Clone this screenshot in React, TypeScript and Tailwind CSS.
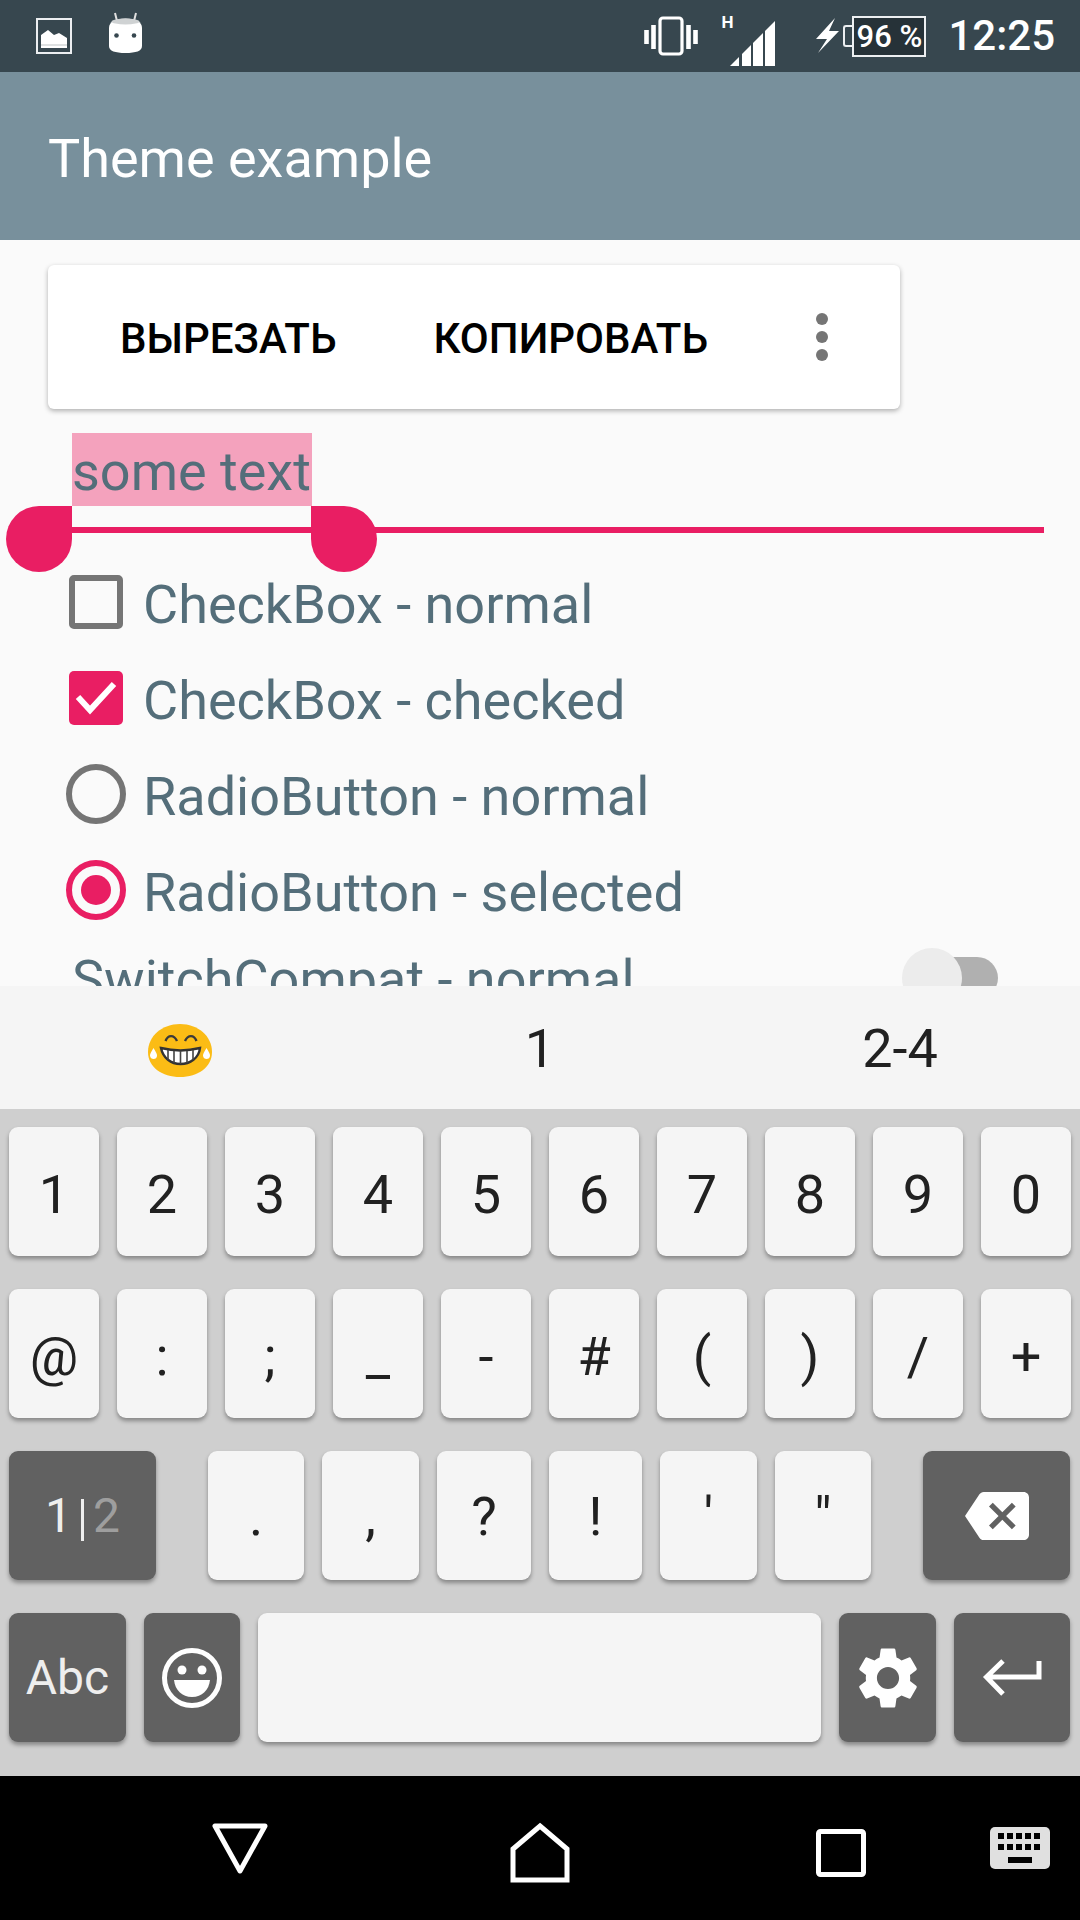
import React from "react";
import { MdSettings, MdBackspace } from "react-icons/md";

const font = { fontFamily: "Roboto, sans-serif" };

function Key({ label, w, dark, className = "", children }: { label?: string; w?: string; dark?: boolean; className?: string; children?: React.ReactNode }) {
  return (
    <div
      className={`flex h-[129px] items-center justify-center rounded-[9px] shadow-[0_3px_4px_rgba(0,0,0,0.35)] ${dark ? "bg-[#616161] text-[#eeeeee]" : "bg-[#f5f5f5] text-[#212121]"} leading-none ${className || "text-[54px]"} ${w ?? "flex-1"}`}
    >
      {label}
      {children}
    </div>
  );
}

function Emoji() {
  return (
    <svg width="100" height="80" viewBox="0 0 100 80" className="mt-[6px]">
      <path d="M50 13C68 13 82 25 82 41C82 56 68 66 50 66C32 66 18 56 18 41C18 25 32 13 50 13Z" fill="#fbbc15" />
      <path d="M35.500 30C38 23.500 44 23.500 47 30M55 30C58 23.500 64 23.500 66.500 30" fill="none" stroke="#3a3a3a" strokeWidth="2.400" />
      <path d="M31 37C43 40 58 40 70 37C69 47 60 53 50.500 53C41 53 33 47 31 37Z" fill="#fff" stroke="#333" strokeWidth="2.400" />
      <path d="M38 39V49M44 40V52M50.500 40V53M57 40V52M63 39V49" stroke="#444" strokeWidth="1.600" />
      <path d="M23.500 37C21 41 20 43 20 44.500C20 47 22 48 23.500 48C25.500 48 27 47 27 44.500C27 43 26 41 23.500 37Z" fill="#fff" />
      <path d="M76.500 37C74 41 73 43 73 44.500C73 47 75 48 76.500 48C78.500 48 80 47 80 44.500C80 43 79 41 76.500 37Z" fill="#fff" />
    </svg>
  );
}

function StatusBar() {
  const bars = [[730, 739], [742, 751], [753, 763], [765, 775]];
  return (
    <div className="relative flex h-[72px] shrink-0 items-center bg-[#37474f] pl-[36px] pr-[25px] text-white">
      <svg width="36" height="36" viewBox="0 0 36 36" className="mt-[-1px]">
        <rect x="1" y="1" width="34" height="34" fill="none" stroke="#eceff1" strokeWidth="2" />
        <path d="M5 30V17L12 12L18 17L23 15L31 20V30Z" fill="#fff" />
        <path d="M5 27H31" stroke="#37474f" strokeWidth="0.8" opacity="0.4" />
      </svg>
      <svg width="36" height="42" viewBox="0 0 36 42" className="ml-[36px] mt-[-6px]">
        <path d="M7 1L9 9M28 1L26 9" stroke="#e0e0e0" strokeWidth="2" />
        <path d="M1 16C1 10 7 6.500 17.500 6.500C28 6.500 34 10 34 16V34C34 39 28 41 17.500 41C7 41 1 39 1 34Z" fill="#fff" />
        <ellipse cx="17.500" cy="9.500" rx="14" ry="3" fill="#cfd2d3" />
        <circle cx="8.500" cy="23.500" r="2.300" fill="#37474f" />
        <circle cx="26" cy="23.500" r="2.300" fill="#37474f" />
      </svg>
      <div className="flex-1" />
      <svg width="54" height="40" viewBox="0 0 54 40" className="mr-[23px]">
        <rect x="16" y="2" width="22" height="36" rx="3" fill="none" stroke="#fff" strokeWidth="3.200" />
        <path d="M2.500 14V28M9.500 9V33M44.500 9V33M51.500 14V28" stroke="#fff" strokeWidth="4.600" />
      </svg>
      <div className="relative h-[60px] w-[54px]">
        <span className="absolute left-0 top-[6px] text-[17px] font-bold leading-[20px]">H</span>
        <svg width="45" height="45" viewBox="730 15 45 45" className="absolute left-[9px] top-[15px]">
          {bars.map(([a, b]) => (
            <polygon key={a} points={`${a},60 ${a},${60 - (a - 730)} ${b},${60 - (b - 730)} ${b},60`} fill="#fff" />
          ))}
        </svg>
      </div>
      <svg width="24" height="36" viewBox="0 0 24 36" className="ml-[40px]">
        <path d="M20 0L1 21H12L3 35L24 13H14Z" fill="#fff" />
      </svg>
      <div className="ml-[4px] flex items-center">
        <div className="h-[22px] w-[9px] rounded-l-[3px] border-2 border-r-0 border-[#eceff1]" />
        <div className="flex h-[41px] w-[74px] items-center justify-center border-2 border-[#eceff1] bg-[#263238] text-[31px] font-medium leading-none">
          96 %
        </div>
      </div>
      <span className="ml-[22px] text-[42px] font-medium leading-none">12:25</span>
    </div>
  );
}

function Dots() {
  return (
    <svg width="12" height="48" viewBox="0 0 12 48" className="ml-auto mr-[72px] mt-[-4px]">
      <circle cx="6" cy="6" r="6" fill="#757575" />
      <circle cx="6" cy="24" r="6" fill="#757575" />
      <circle cx="6" cy="42" r="6" fill="#757575" />
    </svg>
  );
}

function Row({ icon, label }: { icon: React.ReactNode; label: string }) {
  return (
    <div className="flex h-[96px] items-center pl-[66px]">
      <div className="flex w-[60px] items-center justify-center">{icon}</div>
      <span className="ml-[17px] pt-[5px] text-[54px] leading-none text-[#546e7a]">{label}</span>
    </div>
  );
}

function Content() {
  return (
    <div className="relative h-[746px] shrink-0 overflow-hidden bg-[#fafafa] pt-[193px]">
      <div className="absolute left-[48px] top-[25px] flex h-[144px] w-[852px] items-center rounded-[6px] bg-white pl-[72px] pt-[3px] text-[42px] font-medium text-black shadow-[0_2px_5px_rgba(0,0,0,0.3)]">
        <span>ВЫРЕЗАТЬ</span>
        <span className="ml-[97px]">КОПИРОВАТЬ</span>
        <Dots />
      </div>
      <div className="relative pl-[72px]">
        <span className="block h-[73px] w-[240px] bg-[#f4a2bd] text-[54px] leading-[77px] text-[#546e7a]">some text</span>
        <div className="mt-[21px] h-[6px] w-[972px] bg-[#e91e63]" />
        <div className="absolute left-[6px] top-[73px] h-[66px] w-[66px] rounded-tl-[33px] rounded-bl-[33px] rounded-br-[33px] bg-[#e91e63]" />
        <div className="absolute left-[311px] top-[73px] h-[66px] w-[66px] rounded-tr-[33px] rounded-bl-[33px] rounded-br-[33px] bg-[#e91e63]" />
      </div>
      <div className="mt-[21px]">
        <Row icon={<div className="h-[54px] w-[54px] rounded-[5px] border-[6px] border-[#757575]" />} label="CheckBox - normal" />
        <Row
          icon={
            <div className="flex h-[54px] w-[54px] items-center justify-center rounded-[5px] bg-[#e91e63]">
              <svg width="42" height="34" viewBox="0 0 42 34">
                <path d="M3 16L15 29L39 3" fill="none" stroke="#fff" strokeWidth="6" />
              </svg>
            </div>
          }
          label="CheckBox - checked"
        />
        <Row icon={<div className="h-[60px] w-[60px] rounded-full border-[6px] border-[#757575]" />} label="RadioButton - normal" />
        <Row
          icon={
            <div className="flex h-[60px] w-[60px] items-center justify-center rounded-full border-[6px] border-[#e91e63]">
              <div className="h-[30px] w-[30px] rounded-full bg-[#e91e63]" />
            </div>
          }
          label="RadioButton - selected"
        />
        <div className="relative flex h-[84px] items-center pl-[72px]">
          <span className="text-[54px] leading-none text-[#546e7a]">SwitchCompat - normal</span>
          <div className="absolute left-[930px] top-[19px] h-[42px] w-[68px] rounded-full bg-[#b0b0b0]" />
          <div className="absolute left-[902px] top-[10px] h-[60px] w-[60px] rounded-full bg-[#ececec]" />
        </div>
      </div>
    </div>
  );
}

function Candidates() {
  return (
    <div className="grid h-[123px] shrink-0 grid-cols-3 items-center justify-items-center bg-[#f5f5f5] text-[54px] leading-none text-[#212121]">
      <Emoji />
      <span className="pt-[3px]">1</span>
      <span className="pt-[3px]">2-4</span>
    </div>
  );
}

function Keyboard() {
  const r1 = ["1", "2", "3", "4", "5", "6", "7", "8", "9", "0"];
  const r2 = ["@", ":", ";", "_", "-", "#", "(", ")", "/", "+"];
  return (
    <div className="flex h-[667px] shrink-0 flex-col gap-[33px] bg-[#cfcfcf] px-[9px] pt-[18px]">
      <div className="flex gap-[18px]">
        {r1.map((k) => (
          <Key key={k} label={k} w="flex-1 pt-[6px]" />
        ))}
      </div>
      <div className="flex gap-[18px]">
        {r2.map((k) => (
          <Key key={k} label={k} w="flex-1 pt-[6px]" />
        ))}
      </div>
      <div className="flex">
        <Key dark w="w-[147px]" className="text-[48px]">
          <span>1</span>
          <span className="mx-[9px] h-[42px] w-[3px] translate-y-[4px] bg-[#eeeeee]" />
          <span className="text-[#9e9e9e]">2</span>
        </Key>
        <div className="ml-[52px] flex gap-[18px]">
          <Key label="." w="w-[96px] pt-[3px]" />
          <Key label="," w="w-[97px] pt-[3px]" />
          <Key label="?" w="w-[94px] pt-[3px]" />
          <Key label="!" w="w-[93px] pt-[3px]" />
          <Key label="'" w="w-[97px] pt-[3px]" />
          <Key label={'"'} w="w-[96px] pt-[3px]" />
        </div>
        <Key dark w="w-[147px] ml-[52px]">
          <MdBackspace size={64} color="#ffffff" />
        </Key>
      </div>
      <div className="flex gap-[18px]">
        <Key dark label="Abc" w="w-[117px]" className="text-[48px]" />
        <Key dark w="w-[96px]">
          <svg width="62" height="62" viewBox="0 0 62 62">
            <circle cx="31" cy="31" r="27.500" fill="none" stroke="#fff" strokeWidth="5" />
            <circle cx="21" cy="23" r="4.500" fill="#fff" />
            <circle cx="41" cy="23" r="4.500" fill="#fff" />
            <path d="M13 33H49C48 43 41 50 31 50C21 50 14 43 13 33Z" fill="#fff" />
          </svg>
        </Key>
        <Key w="w-[563px]" />
        <Key dark w="w-[97px]">
          <MdSettings size={74} color="#ffffff" />
        </Key>
        <Key dark w="w-[116px]">
          <svg width="60" height="38" viewBox="0 0 60 38">
            <path d="M57 2V18H5M21 2L4.500 18L21 35" fill="none" stroke="#fff" strokeWidth="5" />
          </svg>
        </Key>
      </div>
    </div>
  );
}

function NavBar() {
  return (
    <div className="relative h-[144px] shrink-0 bg-black">
      <svg width="60" height="54" viewBox="0 0 60 54" className="absolute left-[210px] top-[46px]">
        <path d="M5 4H55L30 49Z" fill="none" stroke="#fff" strokeWidth="5" strokeLinejoin="round" />
      </svg>
      <svg width="60" height="62" viewBox="0 0 60 62" className="absolute left-[510px] top-[45px]">
        <path d="M30 5L57 28V59H3V28Z" fill="none" stroke="#fff" strokeWidth="5" />
      </svg>
      <svg width="50" height="48" viewBox="0 0 50 48" className="absolute left-[816px] top-[53px]">
        <rect x="2.500" y="2.500" width="45" height="43" rx="2" fill="none" stroke="#fff" strokeWidth="5" />
      </svg>
      <svg width="60" height="42" viewBox="0 0 60 42" className="absolute left-[990px] top-[51px]">
        <rect width="60" height="42" rx="5" fill="#e0e0e0" />
        <path d="M8 9H52M8 20H52" stroke="#000" strokeWidth="6" strokeDasharray="6 3" />
        <rect x="18" y="30" width="24" height="6" fill="#000" />
      </svg>
    </div>
  );
}

export default function App() {
  return (
    <div className="flex h-[1920px] w-[1080px] flex-col overflow-hidden" style={font}>
      <StatusBar />
      <div className="flex h-[168px] shrink-0 items-center bg-[#78909c] pl-[48px] pt-[6px] text-[54px] leading-none text-white">
        Theme example
      </div>
      <Content />
      <Candidates />
      <Keyboard />
      <NavBar />
    </div>
  );
}
